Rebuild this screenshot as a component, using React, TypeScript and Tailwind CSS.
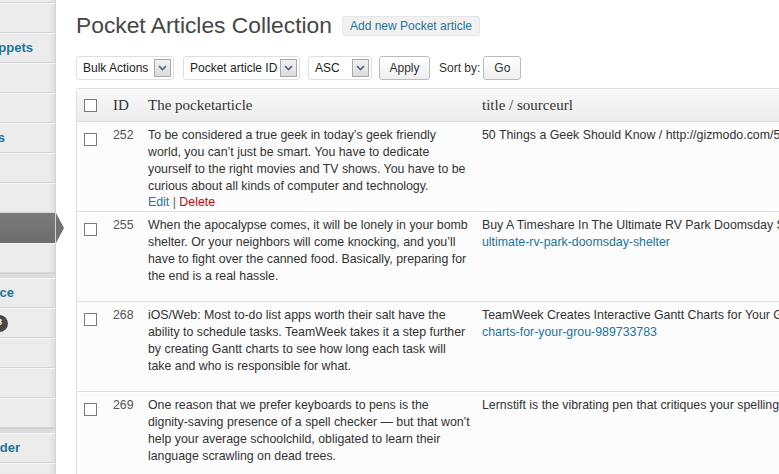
import React from 'react';

type MenuItem = { label?: string; pr?: number; badge?: boolean; current?: boolean; sep?: boolean };

const menu: MenuItem[] = [
  {},
  { label: 'Snippets', pr: 22 },
  {},
  {},
  { label: 'Posts', pr: 50 },
  {},
  {},
  { current: true },
  {},
  { sep: true },
  { label: 'Appearance', pr: 41 },
  { badge: true },
  {},
  {},
  {},
  { sep: true },
  { label: 'Slider', pr: 35 },
  {},
];

const rows = [
  {
    id: 252,
    text: [
      'To be considered a true geek in today\u2019s geek friendly',
      'world, you can\u2019t just be smart. You have to dedicate',
      'yourself to the right movies and TV shows. You have to be',
      'curious about all kinds of computer and technology.',
    ],
    title: '50 Things a Geek Should Know / http://gizmodo.com/5990419/50-things-a-geek-should-know',
    url: '',
    actions: true,
  },
  {
    id: 255,
    text: [
      'When the apocalypse comes, it will be lonely in your bomb',
      'shelter. Or your neighbors will come knocking, and you\u2019ll',
      'have to fight over the canned food. Basically, preparing for',
      'the end is a real hassle.',
    ],
    title: 'Buy A Timeshare In The Ultimate RV Park Doomsday Shelter / http://gizmodo.com/buy-a-timeshare-in-the-',
    url: 'ultimate-rv-park-doomsday-shelter',
    actions: false,
  },
  {
    id: 268,
    text: [
      'iOS/Web: Most to-do list apps worth their salt have the',
      'ability to schedule tasks. TeamWeek takes it a step further',
      'by creating Gantt charts to see how long each task will',
      'take and who is responsible for what.',
    ],
    title: 'TeamWeek Creates Interactive Gantt Charts for Your Group / http://lifehacker.com/teamweek-creates-interactive-gantt-',
    url: 'charts-for-your-grou-989733783',
    actions: false,
  },
  {
    id: 269,
    text: [
      'One reason that we prefer keyboards to pens is the',
      'dignity-saving presence of a spell checker \u2014 but that won\u2019t',
      'help your average schoolchild, obligated to learn their',
      'language scrawling on dead trees.',
    ],
    title: 'Lernstift is the vibrating pen that critiques your spelling',
    url: '',
    actions: false,
  },
];

function Select({ label, width }: { label: string; width: string }) {
  return (
    <div className={`${width} h-[24px] flex items-center justify-between bg-white border border-[#dfdfdf] rounded-[3px] pl-[6px] pr-[2px]`}>
      <span className="text-[12px] text-[#222] whitespace-nowrap">{label}</span>
      <span className="w-[17px] h-[18px] flex items-center justify-center border border-[#a9a9a9] bg-gradient-to-b from-[#f2f2f2] to-[#dcdcdc]">
        <svg width="9" height="6" viewBox="0 0 9 6">
          <path d="M1 1 L4.5 4.5 L8 1" fill="none" stroke="#4d6185" strokeWidth="1.6" />
        </svg>
      </span>
    </div>
  );
}

function Checkbox() {
  return <span className="block w-[13px] h-[13px] bg-white border border-[#7a7a7a]" />;
}

export default function App() {
  return (
    <div className="w-[779px] h-[474px] overflow-hidden flex bg-white font-['Liberation_Sans',Arial,sans-serif]">
      {/* Admin menu */}
      <aside className="relative w-[56px] shrink-0 bg-[#ececec] border-r border-[#d4d4d4] shadow-[inset_-5px_0_5px_-3px_rgba(0,0,0,0.08)]">
        <div className="h-[3px] border-b border-[#d5d5d5]" />
        {menu.map((m, i) =>
          m.sep ? (
            <div key={i} className="h-[5px] bg-[#dcdcdc] border-t border-[#cfcfcf]" />
          ) : m.current ? (
            <div key={i} className="relative h-[30px] bg-gradient-to-b from-[#7a7a7a] to-[#6d6d6d]">
              <div className="absolute left-[56px] top-0 w-[8px] h-[30px] bg-[#717171] [clip-path:polygon(0_0,100%_50%,0_100%)]" />
            </div>
          ) : (
            <div
              key={i}
              className="h-[30px] flex items-center justify-end border-b border-[#d5d5d5] border-t border-t-[#f6f6f6] overflow-hidden"
              style={{ paddingRight: m.pr ?? 0 }}
            >
              {m.label && (
                <span className="text-[13px] font-semibold text-[#21759b] whitespace-nowrap">{m.label}</span>
              )}
              {m.badge && (
                <span className="flex items-center whitespace-nowrap" style={{ marginRight: 47 }}>
                  <span className="text-[13px] font-semibold text-[#21759b] mr-[4px]">Plugins</span>
                  <span className="w-[17px] h-[17px] rounded-full bg-[#464646] text-white text-[9px] font-bold flex items-center justify-center">3</span>
                </span>
              )}
            </div>
          )
        )}
      </aside>

      {/* Main */}
      <main className="flex-1 min-w-0 pl-[20px] pt-[11px]">
        <div className="flex items-center h-[29px]">
          <h2 className="text-[22.8px] leading-[29px] text-[#464646] whitespace-nowrap">Pocket Articles Collection</h2>
          <span className="ml-[10px] h-[20px] px-[7px] flex items-center rounded-[3px] bg-[#f1f1f1] border border-[#e6e6e6] text-[12px] text-[#21759b] whitespace-nowrap">
            Add new Pocket article
          </span>
        </div>

        <div className="flex items-center mt-[16px] h-[24px] text-[12px]">
          <Select label="Bulk Actions" width="w-[98px]" />
          <div className="w-[9px]" />
          <Select label="Pocket article ID" width="w-[117px]" />
          <div className="w-[8px]" />
          <Select label="ASC" width="w-[64px]" />
          <button className="ml-[7px] w-[51px] h-[24px] rounded-[3px] border border-[#bbbbbb] bg-gradient-to-b from-white to-[#efefef] text-[12px] text-[#333]">
            Apply
          </button>
          <span className="ml-[9px] text-[#333] whitespace-nowrap">Sort by:</span>
          <button className="ml-[3px] w-[38px] h-[24px] rounded-[3px] border border-[#bbbbbb] bg-gradient-to-b from-white to-[#efefef] text-[12px] text-[#333]">
            Go
          </button>
        </div>

        {/* Table */}
        <div className="mt-[8px] w-[760px] border-t border-l border-[#dfdfdf] rounded-tl-[3px] bg-[#fcfcfc]">
          <div className="grid grid-cols-[28px_35px_334px_363px] h-[33px] items-center bg-gradient-to-b from-[#f9f9f9] to-[#ececec] border-b border-[#dfdfdf] font-['Liberation_Serif',Georgia,serif] text-[15px] text-[#333]">
            <div className="pl-[7px]"><Checkbox /></div>
            <div className="pl-[8px] pt-[1px]">ID</div>
            <div className="pl-[8px] pt-[1px]">The pocketarticle</div>
            <div className="pl-[8px] pt-[1px] whitespace-nowrap">title / sourceurl</div>
          </div>
          {rows.map((r) => (
            <div key={r.id} className="grid grid-cols-[28px_35px_334px_363px] border-b border-[#dfdfdf] border-t border-t-white pt-[4px] text-[12.35px] leading-[17px]">
              <div className="pl-[7px] pt-[6px]"><Checkbox /></div>
              <div className="pl-[8px] text-[#555]">{r.id}</div>
              <div className="pl-[8px] text-[#333]">
                {r.text.map((t, i) => (
                  <div key={i} className="whitespace-nowrap">{t}</div>
                ))}
                <div className={`h-[16px] leading-[15px] ${r.actions ? '' : 'invisible'}`}>
                  <span className="text-[#21759b]">Edit</span>
                  <span className="text-[#666]"> | </span>
                  <span className="text-[#bc0b0b]">Delete</span>
                </div>
              </div>
              <div className="pl-[8px] text-[#333] whitespace-nowrap">
                <div>{r.title}</div>
                {r.url && <div className="text-[#21759b]">{r.url}</div>}
              </div>
            </div>
          ))}
        </div>
      </main>
    </div>
  );
}
